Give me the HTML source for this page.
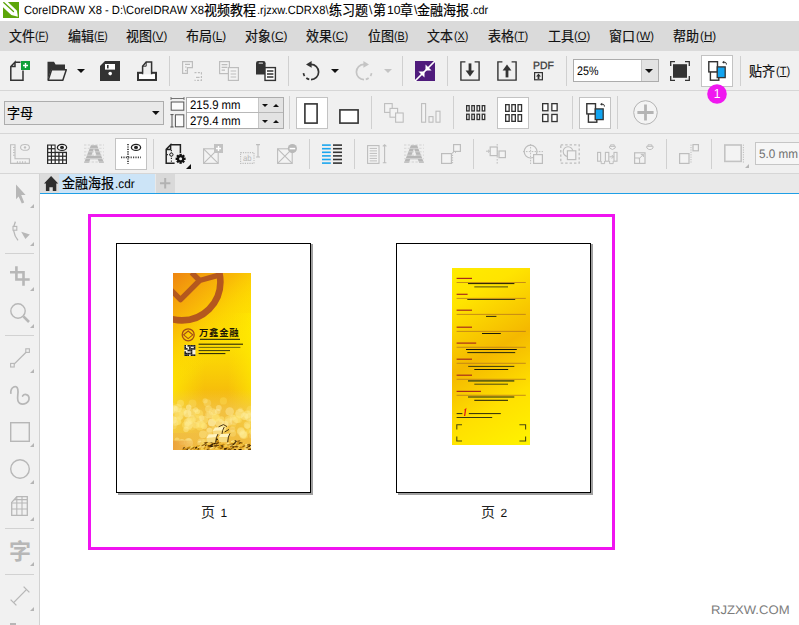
<!DOCTYPE html>
<html lang="zh"><head><meta charset="utf-8"><title>CorelDRAW X8</title>
<style>
html,body{margin:0;padding:0}
body{width:799px;height:625px;position:relative;overflow:hidden;background:#fff;font-family:"Liberation Sans",sans-serif}
.a{position:absolute;display:block}
.t{position:absolute;white-space:nowrap;line-height:1;display:block;text-rendering:geometricPrecision}
svg{overflow:visible}
svg text{font-family:"Liberation Sans","Noto Sans CJK SC",sans-serif}
</style></head><body>

<div class="a" style="left:0px;top:0px;width:799px;height:21px;background:#fff"></div>
<div class="a" style="left:0px;top:21px;width:799px;height:30px;background:#dadada"></div>
<div class="a" style="left:0px;top:51px;width:799px;height:122px;background:#f0f0f0"></div>
<div class="a" style="left:0px;top:90px;width:799px;height:1px;background:#d6d6d6"></div>
<div class="a" style="left:0px;top:133px;width:799px;height:1px;background:#d6d6d6"></div>
<div class="a" style="left:0px;top:173px;width:799px;height:1px;background:#d6d6d6"></div>
<div class="a" style="left:0px;top:174px;width:39px;height:451px;background:#f1f1f1"></div>
<div class="a" style="left:39px;top:174px;width:1px;height:451px;background:#d2d2d2"></div>
<div class="a" style="left:40px;top:174px;width:759px;height:19px;background:#e9e9e9"></div>
<div class="a" style="left:40px;top:174px;width:19px;height:19px;background:#dcdcdc"></div>
<div class="a" style="left:59px;top:174px;width:96px;height:19px;background:#cce4f7"></div>
<div class="a" style="left:156px;top:174px;width:19px;height:19px;background:#d9d9d9"></div>
<div class="a" style="left:40px;top:192.8px;width:759px;height:1.3px;background:#1f9fe6"></div>
<svg class="a" style="left:3px;top:2px" width="16" height="16" viewBox="0 0 16 16"><rect width="16" height="16" fill="#5ba508"/><path d="M0 0H4.9L14 8.8L14.9 14.8L8.3 13.1L0 5.2Z" fill="#fff"/><path d="M0.7 0.6L10.5 9.5" stroke="#5ba508" stroke-width="1.3" stroke-linecap="round"/></svg>
<span class="t" style="left:24.10px;top:4.44px;font-size:12px;color:#000;transform:scaleX(0.9320);transform-origin:0 0;">CoreIDRAW X8 - D:\CoreIDRAW X8</span>
<svg class="a" style="left:203.98px;top:1.40px" width="54.00" height="18.43" viewBox="0 -13.65 54.00 18.43" fill="#000"><text x="0" y="0" font-size="13.65" textLength="52" lengthAdjust="spacingAndGlyphs" fill="#000" stroke="#000" stroke-width="0.2">视频教程</text></svg>
<span class="t" style="left:256.60px;top:4.44px;font-size:12px;color:#000;transform:scaleX(0.9244);transform-origin:0 0;">.rjzxw.CDRX8\</span>
<svg class="a" style="left:328.98px;top:1.40px" width="41.00" height="18.43" viewBox="0 -13.65 41.00 18.43" fill="#000"><text x="0" y="0" font-size="13.65" textLength="39" lengthAdjust="spacingAndGlyphs" fill="#000" stroke="#000" stroke-width="0.2">练习题</text></svg>
<span class="t" style="left:369.00px;top:4.44px;font-size:12px;color:#000;">\</span>
<svg class="a" style="left:372.88px;top:1.40px" width="15.00" height="18.43" viewBox="0 -13.65 15.00 18.43" fill="#000"><text x="0" y="0" font-size="13.65" textLength="13" lengthAdjust="spacingAndGlyphs" fill="#000" stroke="#000" stroke-width="0.2">第</text></svg>
<span class="t" style="left:387.00px;top:4.44px;font-size:12px;color:#000;transform:scaleX(1.0114);transform-origin:0 0;">10</span>
<svg class="a" style="left:400.48px;top:1.40px" width="15.00" height="18.43" viewBox="0 -13.65 15.00 18.43" fill="#000"><text x="0" y="0" font-size="13.65" textLength="13" lengthAdjust="spacingAndGlyphs" fill="#000" stroke="#000" stroke-width="0.2">章</text></svg>
<span class="t" style="left:414.00px;top:4.44px;font-size:12px;color:#000;">\</span>
<svg class="a" style="left:417.48px;top:1.40px" width="54.00" height="18.43" viewBox="0 -13.65 54.00 18.43" fill="#000"><text x="0" y="0" font-size="13.65" textLength="52" lengthAdjust="spacingAndGlyphs" fill="#000" stroke="#000" stroke-width="0.2">金融海报</text></svg>
<span class="t" style="left:469.60px;top:4.44px;font-size:12px;color:#000;transform:scaleX(0.8998);transform-origin:0 0;">.cdr</span>
<svg class="a" style="left:8.68px;top:27.00px" width="28.00" height="18.43" viewBox="0 -13.65 28.00 18.43" fill="#111"><text x="0" y="0" font-size="13.65" textLength="26" lengthAdjust="spacingAndGlyphs" fill="#111" stroke="#111" stroke-width="0.2">文件</text></svg>
<span class="t" style="left:34.60px;top:30.14px;font-size:12px;color:#111;transform:scaleX(0.8876);transform-origin:0 0">(<u style="text-underline-offset:1px">F</u>)</span>
<svg class="a" style="left:67.97px;top:27.00px" width="28.00" height="18.43" viewBox="0 -13.65 28.00 18.43" fill="#111"><text x="0" y="0" font-size="13.65" textLength="26" lengthAdjust="spacingAndGlyphs" fill="#111" stroke="#111" stroke-width="0.2">编辑</text></svg>
<span class="t" style="left:93.80px;top:30.14px;font-size:12px;color:#111;transform:scaleX(0.8627);transform-origin:0 0">(<u style="text-underline-offset:1px">E</u>)</span>
<svg class="a" style="left:126.17px;top:27.00px" width="28.00" height="18.43" viewBox="0 -13.65 28.00 18.43" fill="#111"><text x="0" y="0" font-size="13.65" textLength="26" lengthAdjust="spacingAndGlyphs" fill="#111" stroke="#111" stroke-width="0.2">视图</text></svg>
<span class="t" style="left:152.40px;top:30.14px;font-size:12px;color:#111;transform:scaleX(0.9502);transform-origin:0 0">(<u style="text-underline-offset:1px">V</u>)</span>
<svg class="a" style="left:185.68px;top:27.00px" width="28.00" height="18.43" viewBox="0 -13.65 28.00 18.43" fill="#111"><text x="0" y="0" font-size="13.65" textLength="26" lengthAdjust="spacingAndGlyphs" fill="#111" stroke="#111" stroke-width="0.2">布局</text></svg>
<span class="t" style="left:212.40px;top:30.14px;font-size:12px;color:#111;transform:scaleX(0.9682);transform-origin:0 0">(<u style="text-underline-offset:1px">L</u>)</span>
<svg class="a" style="left:244.68px;top:27.00px" width="28.00" height="18.43" viewBox="0 -13.65 28.00 18.43" fill="#111"><text x="0" y="0" font-size="13.65" textLength="26" lengthAdjust="spacingAndGlyphs" fill="#111" stroke="#111" stroke-width="0.2">对象</text></svg>
<span class="t" style="left:271.00px;top:30.14px;font-size:12px;color:#111;transform:scaleX(0.9845);transform-origin:0 0">(<u style="text-underline-offset:1px">C</u>)</span>
<svg class="a" style="left:306.28px;top:27.00px" width="28.00" height="18.43" viewBox="0 -13.65 28.00 18.43" fill="#111"><text x="0" y="0" font-size="13.65" textLength="26" lengthAdjust="spacingAndGlyphs" fill="#111" stroke="#111" stroke-width="0.2">效果</text></svg>
<span class="t" style="left:332.40px;top:30.14px;font-size:12px;color:#111;transform:scaleX(0.9605);transform-origin:0 0">(<u style="text-underline-offset:1px">C</u>)</span>
<svg class="a" style="left:368.28px;top:27.00px" width="28.00" height="18.43" viewBox="0 -13.65 28.00 18.43" fill="#111"><text x="0" y="0" font-size="13.65" textLength="26" lengthAdjust="spacingAndGlyphs" fill="#111" stroke="#111" stroke-width="0.2">位图</text></svg>
<span class="t" style="left:394.00px;top:30.14px;font-size:12px;color:#111;transform:scaleX(0.8877);transform-origin:0 0">(<u style="text-underline-offset:1px">B</u>)</span>
<svg class="a" style="left:427.18px;top:27.00px" width="28.00" height="18.43" viewBox="0 -13.65 28.00 18.43" fill="#111"><text x="0" y="0" font-size="13.65" textLength="26" lengthAdjust="spacingAndGlyphs" fill="#111" stroke="#111" stroke-width="0.2">文本</text></svg>
<span class="t" style="left:453.60px;top:30.14px;font-size:12px;color:#111;transform:scaleX(0.9002);transform-origin:0 0">(<u style="text-underline-offset:1px">X</u>)</span>
<svg class="a" style="left:487.98px;top:27.00px" width="28.00" height="18.43" viewBox="0 -13.65 28.00 18.43" fill="#111"><text x="0" y="0" font-size="13.65" textLength="26" lengthAdjust="spacingAndGlyphs" fill="#111" stroke="#111" stroke-width="0.2">表格</text></svg>
<span class="t" style="left:513.80px;top:30.14px;font-size:12px;color:#111;transform:scaleX(0.9267);transform-origin:0 0">(<u style="text-underline-offset:1px">T</u>)</span>
<svg class="a" style="left:548.27px;top:27.00px" width="28.00" height="18.43" viewBox="0 -13.65 28.00 18.43" fill="#111"><text x="0" y="0" font-size="13.65" textLength="26" lengthAdjust="spacingAndGlyphs" fill="#111" stroke="#111" stroke-width="0.2">工具</text></svg>
<span class="t" style="left:573.80px;top:30.14px;font-size:12px;color:#111;transform:scaleX(0.9350);transform-origin:0 0">(<u style="text-underline-offset:1px">O</u>)</span>
<svg class="a" style="left:609.27px;top:27.00px" width="28.00" height="18.43" viewBox="0 -13.65 28.00 18.43" fill="#111"><text x="0" y="0" font-size="13.65" textLength="26" lengthAdjust="spacingAndGlyphs" fill="#111" stroke="#111" stroke-width="0.2">窗口</text></svg>
<span class="t" style="left:636.00px;top:30.14px;font-size:12px;color:#111;transform:scaleX(0.9317);transform-origin:0 0">(<u style="text-underline-offset:1px">W</u>)</span>
<svg class="a" style="left:673.47px;top:27.00px" width="28.00" height="18.43" viewBox="0 -13.65 28.00 18.43" fill="#111"><text x="0" y="0" font-size="13.65" textLength="26" lengthAdjust="spacingAndGlyphs" fill="#111" stroke="#111" stroke-width="0.2">帮助</text></svg>
<span class="t" style="left:700.00px;top:30.14px;font-size:12px;color:#111;transform:scaleX(0.9725);transform-origin:0 0">(<u style="text-underline-offset:1px">H</u>)</span>
<svg class="a" style="left:10px;top:61px" width="20" height="20" viewBox="0 0 20 20"><path d="M5 1.2H10.5M13 9.5V19.2H0.8V5.6L5 1.2V5.6H0.8" fill="none" stroke="#333" stroke-width="1.5"/><rect x="11" y="0" width="9" height="9" fill="#10a03a"/><path d="M15.5 2V7M13 4.5H18" stroke="#fff" stroke-width="1.4"/></svg>
<svg class="a" style="left:47px;top:61px" width="20" height="20" viewBox="0 0 20 20"><path d="M0.5 0.8H7L8.6 3.4H18V8.6H4.2L0.5 19.4Z" fill="#333"/><path d="M4.6 8.7H19.3L15.8 19.3H1.2Z" fill="#f0f0f0" stroke="#333" stroke-width="1.5" stroke-linejoin="round"/></svg>
<svg class="a" style="left:77px;top:69px" width="8" height="4" viewBox="0 0 8 4"><path d="M0 0H8 L4 4 Z" fill="#111"/></svg>
<svg class="a" style="left:100px;top:61px" width="20" height="20" viewBox="0 0 20 20"><path d="M5 0H20V20H0V5Z" fill="#333"/><rect x="5" y="3" width="10" height="5.6" fill="#fff"/><rect x="7" y="4" width="1.6" height="3.4" fill="#333"/><circle cx="10.2" cy="12.6" r="1.8" fill="#fff"/></svg>
<svg class="a" style="left:137px;top:61px" width="20" height="20" viewBox="0 0 20 20"><rect x="1" y="11.8" width="18" height="7.2" fill="#fff" stroke="#333" stroke-width="2"/><path d="M5.6 13.2V5.2L9.2 1H14.6V13.2" fill="#f0f0f0" stroke="#333" stroke-width="1.5"/><path d="M5.6 5.2H9.2V1" fill="none" stroke="#333" stroke-width="1"/><path d="M6.4 12.9H13.8" stroke="#f0f0f0" stroke-width="0.6"/></svg>
<div class="a" style="left:169px;top:56px;width:1px;height:30px;background:#d0d0d0"></div>
<svg class="a" style="left:182px;top:61px" width="20" height="20" viewBox="0 0 20 20"><path d="M0.6 0.6H10.4V6.6H5.4V12.4H0.6Z" fill="#f3f3f3" stroke="#bdbdbd" stroke-width="1.2"/><path d="M3 3.4H8M3 6H4.6M3 9.6H4.6" stroke="#bdbdbd" stroke-width="1.2"/><path d="M12.5 11.6H19.4V19.4H12.5" fill="#f3f3f3" stroke="#bdbdbd" stroke-width="1.2" stroke-dasharray="2 1.4"/><path d="M14 16.4H17.6" stroke="#bdbdbd" stroke-width="1.2"/></svg>
<svg class="a" style="left:219px;top:61px" width="20" height="20" viewBox="0 0 20 20"><rect x="0.6" y="0.6" width="9.8" height="12" fill="#f3f3f3" stroke="#bdbdbd" stroke-width="1.2"/><path d="M2.6 3.6H8.4M2.6 6.4H8.4M2.6 9.2H6" stroke="#bdbdbd" stroke-width="1.2"/><rect x="9.4" y="6.6" width="10" height="12.8" fill="#f3f3f3" stroke="#bdbdbd" stroke-width="1.2"/><path d="M11.6 10H17.2M11.6 13H17.2M11.6 16H17.2" stroke="#bdbdbd" stroke-width="1.2"/></svg>
<svg class="a" style="left:256px;top:61px" width="20" height="20" viewBox="0 0 20 20"><path d="M0 2.2Q0 0 2.2 0H7.4Q9.6 0 9.6 2.2V13.4H0Z" fill="#333"/><rect x="2.6" y="1.4" width="4.4" height="1.4" rx=".6" fill="#cfcfcf"/><rect x="9" y="6.6" width="10.4" height="12.8" fill="#fff" stroke="#333" stroke-width="1.4"/><path d="M11 10H17.4M11 13H17.4M11 16H17.4" stroke="#333" stroke-width="1.5"/></svg>
<div class="a" style="left:288px;top:56px;width:1px;height:30px;background:#d0d0d0"></div>
<svg class="a" style="left:300.6px;top:61px" width="20" height="20" viewBox="0 0 20 20"><path d="M10 3.4A7.6 7.6 0 1 1 10 18.6" fill="none" stroke="#333" stroke-width="1.7"/><path d="M10 18.6A7.6 7.6 0 0 1 2.4 11" fill="none" stroke="#333" stroke-width="1.7" stroke-dasharray="3.2 2.6" stroke-dashoffset="-1.8"/><path d="M10.6 0V6.8L5 3.4Z" fill="#333"/></svg>
<svg class="a" style="left:331px;top:69px" width="8" height="4" viewBox="0 0 8 4"><path d="M0 0H8 L4 4 Z" fill="#111"/></svg>
<svg class="a" style="left:353.6px;top:61px" width="20" height="20" viewBox="0 0 20 20"><g transform="translate(20,0) scale(-1,1)"><path d="M10 3.4A7.6 7.6 0 1 1 10 18.6" fill="none" stroke="#c4c4c4" stroke-width="1.7"/><path d="M10 18.6A7.6 7.6 0 0 1 2.4 11" fill="none" stroke="#c4c4c4" stroke-width="1.7" stroke-dasharray="3.2 2.6" stroke-dashoffset="-1.8"/><path d="M10.6 0V6.8L5 3.4Z" fill="#c4c4c4"/></g></svg>
<svg class="a" style="left:384px;top:69px" width="8" height="4" viewBox="0 0 8 4"><path d="M0 0H8 L4 4 Z" fill="#c4c4c4"/></svg>
<div class="a" style="left:402px;top:56px;width:1px;height:30px;background:#d0d0d0"></div>
<svg class="a" style="left:415px;top:61px" width="20" height="20" viewBox="0 0 20 20"><rect width="20" height="20" fill="#4f1b7c"/><path d="M20 0L0 20" stroke="#fff" stroke-width="1.7"/><path d="M10.5 3.4V9.5H16.6ZM9.5 16.6V10.5H3.4Z" fill="#fff"/></svg>
<div class="a" style="left:447px;top:56px;width:1px;height:30px;background:#d0d0d0"></div>
<svg class="a" style="left:460px;top:61px" width="20" height="20" viewBox="0 0 20 20"><path d="M5.4 0.9H0.9V19.1H19.1V0.9H14.6" fill="none" stroke="#333" stroke-width="1.4"/><path d="M10 2.4V11" stroke="#333" stroke-width="2.8"/><path d="M5.6 9.4H14.4L10 15.4Z" fill="#333"/></svg>
<svg class="a" style="left:497px;top:61px" width="20" height="20" viewBox="0 0 20 20"><path d="M5.4 0.9H0.9V19.1H19.1V0.9H14.6" fill="none" stroke="#333" stroke-width="1.4"/><path d="M10 16.4V8" stroke="#333" stroke-width="2.8"/><path d="M5.6 9.6H14.4L10 3.4Z" fill="#333"/></svg>
<span class="t" style="left:533.40px;top:60.83px;font-size:10.6px;color:#3a3a3a;transform:scaleX(0.9811);transform-origin:0 0;-webkit-text-stroke:.3px #3a3a3a;">PDF</span>
<svg class="a" style="left:534px;top:72px" width="9" height="8.4" viewBox="0 0 9 8.4"><rect x="0.6" y="0.6" width="7.8" height="7.2" fill="none" stroke="#333" stroke-width="1.2"/><path d="M4.5 1.6L7 4.4H5.4V7H3.6V4.4H2Z" fill="#333"/></svg>
<div class="a" style="left:566px;top:56px;width:1px;height:30px;background:#d0d0d0"></div>
<div class="a" style="left:573px;top:59px;width:86px;height:23px;background:#fff;border:1px solid #acacac;box-sizing:border-box"></div>
<div class="a" style="left:640.5px;top:60px;width:17.5px;height:21px;background:#e3e3e3;border-left:1px solid #c6c6c6;box-sizing:border-box"></div>
<span class="t" style="left:577.00px;top:64.90px;font-size:12.4px;color:#000;transform:scaleX(0.8623);transform-origin:0 0;">25%</span>
<svg class="a" style="left:645.4px;top:69px" width="8" height="4" viewBox="0 0 8 4"><path d="M0 0H8 L4 4 Z" fill="#111"/></svg>
<svg class="a" style="left:670px;top:61px" width="20" height="20" viewBox="0 0 20 20"><rect x="3" y="3.2" width="14" height="13.6" fill="#333"/><path d="M0.7 5V0.7H5M15 0.7H19.3V5M19.3 15V19.3H15M5 19.3H0.7V15" fill="none" stroke="#333" stroke-width="1.3"/></svg>
<div class="a" style="left:701px;top:55px;width:32px;height:32px;background:#fff;border:1px solid #c3c3c3;box-sizing:border-box"></div>
<svg class="a" style="left:707px;top:61px" width="20" height="20" viewBox="0 0 20 20"><rect x="3.4" y="10.6" width="8.4" height="8.6" fill="#fff" stroke="#333" stroke-width="1.4"/><rect x="1.8" y="0.7" width="8.7" height="10.2" fill="#fff" stroke="#333" stroke-width="1.4"/><rect x="10.2" y="5.9" width="8" height="10.7" fill="#12a4f0" stroke="#333" stroke-width="1.3"/><path d="M16.4 1.3H18.2Q19.4 1.3 19.4 3.6" fill="none" stroke="#333" stroke-width="1"/><path d="M15 1.3L17.2 -0.2V2.8Z" fill="#333"/></svg>
<div class="a" style="left:740px;top:56px;width:1px;height:30px;background:#d0d0d0"></div>
<svg class="a" style="left:749.07px;top:62.20px" width="28.00" height="18.43" viewBox="0 -13.65 28.00 18.43" fill="#111"><text x="0" y="0" font-size="13.65" textLength="26" lengthAdjust="spacingAndGlyphs" fill="#111" stroke="#111" stroke-width="0.2">贴齐</text></svg>
<span class="t" style="left:775.60px;top:65.24px;font-size:12px;color:#111;transform:scaleX(0.9267);transform-origin:0 0">(<u style="text-underline-offset:1px">T</u>)</span>
<div class="a" style="left:4px;top:101px;width:160px;height:24px;background:#e9e9e9;border:1px solid #adadad;box-sizing:border-box"></div>
<svg class="a" style="left:7.27px;top:103.80px" width="28.00" height="18.43" viewBox="0 -13.65 28.00 18.43" fill="#000"><text x="0" y="0" font-size="13.65" textLength="26" lengthAdjust="spacingAndGlyphs" fill="#000" stroke="#000" stroke-width="0.2">字母</text></svg>
<svg class="a" style="left:152.4px;top:110.6px" width="7.6" height="4" viewBox="0 0 7.6 4"><path d="M0 0H7.6 L3.8 4 Z" fill="#111"/></svg>
<svg class="a" style="left:170px;top:97px" width="15" height="14" viewBox="0 0 15 14"><rect x="1.2" y="5" width="12.6" height="8.2" fill="#fbfbfb" stroke="#555" stroke-width="1"/><path d="M1 1.5H14" stroke="#666" stroke-width=".9"/><path d="M1 0V3M14 0V3" stroke="#666" stroke-width=".9"/></svg>
<svg class="a" style="left:170px;top:113.5px" width="15" height="14" viewBox="0 0 15 14"><rect x="5.4" y="0.8" width="8.4" height="12" fill="#fbfbfb" stroke="#555" stroke-width="1"/><path d="M2 0.5V13" stroke="#555" stroke-width="1"/><path d="M0.4 0.6H3.6M0.4 13H3.6" stroke="#555" stroke-width="1"/></svg>
<div class="a" style="left:186px;top:96.5px;width:97.5px;height:32px;background:#fff;border:1px solid #acacac;box-sizing:border-box"></div>
<div class="a" style="left:258px;top:97.5px;width:24.5px;height:30px;background:#e3e3e3;border-left:1px solid #c6c6c6;box-sizing:border-box"></div>
<div class="a" style="left:187px;top:112px;width:95.5px;height:1px;background:#b8b8b8"></div>
<span class="t" style="left:190.00px;top:99.10px;font-size:12.4px;color:#000;transform:scaleX(0.9178);transform-origin:0 0;">215.9 mm</span>
<span class="t" style="left:190.00px;top:115.10px;font-size:12.4px;color:#000;transform:scaleX(0.9178);transform-origin:0 0;">279.4 mm</span>
<svg class="a" style="left:261.6px;top:103.6px" width="6" height="3" viewBox="0 0 6 3"><path d="M0 0H6 L3 3 Z" fill="#111"/></svg>
<svg class="a" style="left:273.4px;top:103.6px" width="6" height="3" viewBox="0 0 6 3"><path d="M0 3H6L3 0Z" fill="#111"/></svg>
<svg class="a" style="left:261.6px;top:119.6px" width="6" height="3" viewBox="0 0 6 3"><path d="M0 0H6 L3 3 Z" fill="#111"/></svg>
<svg class="a" style="left:273.4px;top:119.6px" width="6" height="3" viewBox="0 0 6 3"><path d="M0 3H6L3 0Z" fill="#111"/></svg>
<div class="a" style="left:289px;top:96px;width:1px;height:33px;background:#d0d0d0"></div>
<div class="a" style="left:296px;top:97px;width:32px;height:32px;background:#fff;border:1px solid #c3c3c3;box-sizing:border-box"></div>
<svg class="a" style="left:304px;top:102.5px" width="14" height="21" viewBox="0 0 14 21"><rect x="0.9" y="0.9" width="12.2" height="19.2" fill="#fff" stroke="#333" stroke-width="1.6"/></svg>
<svg class="a" style="left:339px;top:108.5px" width="20" height="15" viewBox="0 0 20 15"><rect x="0.9" y="0.9" width="18.2" height="13.2" fill="#fff" stroke="#333" stroke-width="1.6"/></svg>
<div class="a" style="left:371px;top:96px;width:1px;height:33px;background:#d0d0d0"></div>
<svg class="a" style="left:384px;top:103px" width="20" height="20" viewBox="0 0 20 20"><rect x="0.6" y="0.6" width="7.6" height="8.8" fill="#f3f3f3" stroke="#bdbdbd" stroke-width="1.1"/><rect x="6" y="5.4" width="7.6" height="8.8" fill="#f3f3f3" stroke="#bdbdbd" stroke-width="1.1"/><rect x="11.6" y="10" width="7.6" height="9.2" fill="#f3f3f3" stroke="#bdbdbd" stroke-width="1.1"/></svg>
<svg class="a" style="left:421px;top:103px" width="20" height="20" viewBox="0 0 20 20"><rect x="0.6" y="0.6" width="4" height="18.6" fill="#f3f3f3" stroke="#bdbdbd" stroke-width="1.1"/><rect x="8" y="13.6" width="4" height="5.6" fill="#f3f3f3" stroke="#bdbdbd" stroke-width="1.1"/><rect x="15" y="8.2" width="4" height="11" fill="#f3f3f3" stroke="#bdbdbd" stroke-width="1.1"/></svg>
<div class="a" style="left:453px;top:96px;width:1px;height:33px;background:#d0d0d0"></div>
<svg class="a" style="left:466px;top:105.4px" width="20.8" height="17.2" viewBox="0 0 20.8 17.2"><rect x="0.65" y="0.65" width="2.5" height="5.3" fill="#fff" stroke="#333" stroke-width="1.3"/><rect x="5.85" y="0.65" width="2.5" height="5.3" fill="#fff" stroke="#333" stroke-width="1.3"/><rect x="11.05" y="0.65" width="2.5" height="5.3" fill="#fff" stroke="#333" stroke-width="1.3"/><rect x="16.25" y="0.65" width="2.5" height="5.3" fill="#fff" stroke="#333" stroke-width="1.3"/><rect x="0.65" y="9.25" width="2.5" height="5.3" fill="#fff" stroke="#333" stroke-width="1.3"/><rect x="5.85" y="9.25" width="2.5" height="5.3" fill="#fff" stroke="#333" stroke-width="1.3"/><rect x="11.05" y="9.25" width="2.5" height="5.3" fill="#fff" stroke="#333" stroke-width="1.3"/><rect x="16.25" y="9.25" width="2.5" height="5.3" fill="#fff" stroke="#333" stroke-width="1.3"/></svg>
<div class="a" style="left:497px;top:97px;width:32px;height:32px;background:#fff;border:1px solid #c3c3c3;box-sizing:border-box"></div>
<svg class="a" style="left:505px;top:104px" width="18.6" height="20" viewBox="0 0 18.6 20"><rect x="0.65" y="0.65" width="3.5" height="6.7" fill="#fff" stroke="#333" stroke-width="1.3"/><rect x="6.85" y="0.65" width="3.5" height="6.7" fill="#fff" stroke="#333" stroke-width="1.3"/><rect x="13.05" y="0.65" width="3.5" height="6.7" fill="#fff" stroke="#333" stroke-width="1.3"/><rect x="0.65" y="10.65" width="3.5" height="6.7" fill="#fff" stroke="#333" stroke-width="1.3"/><rect x="6.85" y="10.65" width="3.5" height="6.7" fill="#fff" stroke="#333" stroke-width="1.3"/><rect x="13.05" y="10.65" width="3.5" height="6.7" fill="#fff" stroke="#333" stroke-width="1.3"/></svg>
<svg class="a" style="left:542px;top:103.2px" width="18.4" height="21.6" viewBox="0 0 18.4 21.6"><rect x="0.65" y="0.65" width="5.3" height="7.1" fill="#fff" stroke="#333" stroke-width="1.3"/><rect x="9.85" y="0.65" width="5.3" height="7.1" fill="#fff" stroke="#333" stroke-width="1.3"/><rect x="0.65" y="11.45" width="5.3" height="7.1" fill="#fff" stroke="#333" stroke-width="1.3"/><rect x="9.85" y="11.45" width="5.3" height="7.1" fill="#fff" stroke="#333" stroke-width="1.3"/></svg>
<div class="a" style="left:572px;top:96px;width:1px;height:33px;background:#d0d0d0"></div>
<div class="a" style="left:579px;top:97px;width:32px;height:32px;background:#fff;border:1px solid #c3c3c3;box-sizing:border-box"></div>
<svg class="a" style="left:585px;top:103px" width="20" height="20" viewBox="0 0 20 20"><rect x="3.4" y="10.6" width="8.4" height="8.6" fill="#fff" stroke="#333" stroke-width="1.4"/><rect x="1.8" y="0.7" width="8.7" height="10.2" fill="#fff" stroke="#333" stroke-width="1.4"/><rect x="10.2" y="5.9" width="8" height="10.7" fill="#12a4f0" stroke="#333" stroke-width="1.3"/><path d="M16.4 1.3H18.2Q19.4 1.3 19.4 3.6" fill="none" stroke="#333" stroke-width="1"/><path d="M15 1.3L17.2 -0.2V2.8Z" fill="#333"/></svg>
<div class="a" style="left:617px;top:96px;width:1px;height:33px;background:#d0d0d0"></div>
<svg class="a" style="left:632.5px;top:100px" width="25" height="25" viewBox="0 0 25 25"><circle cx="12.5" cy="12.5" r="11.8" fill="#f4f4f4" stroke="#b4b4b4" stroke-width="1"/><path d="M12.5 4.4V20.6M4.4 12.5H20.6" stroke="#b4b4b4" stroke-width="2.8"/></svg>
<svg class="a" style="left:707px;top:84.4px" width="20" height="20" viewBox="0 0 20 20"><circle cx="10" cy="10" r="9.8" fill="#f018f0"/></svg>
<svg class="a" style="left:714px;top:89px" width="6" height="9.2" viewBox="0 0 6 9.2"><text x="3" y="9.2" font-size="12" text-anchor="middle" fill="#fff">1</text></svg>
<svg class="a" style="left:10px;top:144px" width="20" height="20" viewBox="0 0 20 20"><path d="M0.6 0.8H5V14.8H19.4V19.4H0.6Z" fill="#f3f3f3" stroke="#bdbdbd" stroke-width="1.1"/><path d="M3 3.4H4.8M3 6H4.8M3 8.6H4.8M3 11.2H4.8M7.4 17.2V19M10 17.2V19M12.6 17.2V19M15.2 17.2V19" stroke="#bdbdbd" stroke-width="1"/><ellipse cx="15" cy="3.4" rx="4.4" ry="2.9" fill="#f3f3f3" stroke="#bdbdbd" stroke-width="1.1"/><circle cx="15" cy="3.4" r="1.2" fill="#bdbdbd"/></svg>
<svg class="a" style="left:47px;top:144px" width="20" height="20" viewBox="0 0 20 20"><path d="M0 0.4H8.6V7.8H20V20H0Z" fill="#2b2b2b"/><rect x="1.3" y="1.6" width="2.5" height="2.5" fill="#fff"/><rect x="5.05" y="1.6" width="2.5" height="2.5" fill="#fff"/><rect x="1.3" y="5.35" width="2.5" height="2.5" fill="#fff"/><rect x="5.05" y="5.35" width="2.5" height="2.5" fill="#fff"/><rect x="1.3" y="9.1" width="2.5" height="2.5" fill="#fff"/><rect x="5.05" y="9.1" width="2.5" height="2.5" fill="#fff"/><rect x="8.8" y="9.1" width="2.5" height="2.5" fill="#fff"/><rect x="12.55" y="9.1" width="2.5" height="2.5" fill="#fff"/><rect x="16.3" y="9.1" width="2.5" height="2.5" fill="#fff"/><rect x="1.3" y="12.85" width="2.5" height="2.5" fill="#fff"/><rect x="5.05" y="12.85" width="2.5" height="2.5" fill="#fff"/><rect x="8.8" y="12.85" width="2.5" height="2.5" fill="#fff"/><rect x="12.55" y="12.85" width="2.5" height="2.5" fill="#fff"/><rect x="16.3" y="12.85" width="2.5" height="2.5" fill="#fff"/><rect x="1.3" y="16.6" width="2.5" height="2.5" fill="#fff"/><rect x="5.05" y="16.6" width="2.5" height="2.5" fill="#fff"/><rect x="8.8" y="16.6" width="2.5" height="2.5" fill="#fff"/><rect x="12.55" y="16.6" width="2.5" height="2.5" fill="#fff"/><rect x="16.3" y="16.6" width="2.5" height="2.5" fill="#fff"/><ellipse cx="15" cy="3.4" rx="4.6" ry="3" fill="#fff" stroke="#222" stroke-width="1.3"/><ellipse cx="15" cy="3.4" rx="2" ry="1.6" fill="#222"/></svg>
<svg class="a" style="left:84px;top:144px" width="20" height="20" viewBox="0 0 20 20"><path d="M0 1H20M0 4.4H20M0 7.8H20M0 11.2H20M0 14.6H20M0 18H20" stroke="#c9c9c9" stroke-width="1" stroke-dasharray="2.4 1.4"/><path d="M7 1H13L20 19H15.2L13.8 15.2H6.2L4.8 19H0ZM7.4 11.8H12.6L10 4.6Z" fill="#b6b6b6" fill-rule="evenodd"/><path d="M0 1H20M0 4.4H20M0 7.8H20M0 11.2H20M0 14.6H20M0 18H20" stroke="#f0f0f0" stroke-opacity=".5" stroke-width="1"/></svg>
<div class="a" style="left:115px;top:138px;width:32px;height:32px;background:#fff;border:1px solid #c3c3c3;box-sizing:border-box"></div>
<svg class="a" style="left:121px;top:144px" width="20" height="20" viewBox="0 0 20 20"><path d="M7 0V20" stroke="#444" stroke-width="1.8" stroke-dasharray="1.2 1.2"/><path d="M0 13.4H20" stroke="#444" stroke-width="1.8" stroke-dasharray="1.2 1.2"/><ellipse cx="15" cy="3.4" rx="4.6" ry="3" fill="#fff" stroke="#222" stroke-width="1.3"/><ellipse cx="15" cy="3.4" rx="2" ry="1.6" fill="#222"/></svg>
<div class="a" style="left:153px;top:139px;width:1px;height:30px;background:#d0d0d0"></div>
<svg class="a" style="left:165px;top:144px" width="21" height="20" viewBox="0 0 21 20"><path d="M5.6 0.8H15.4V9M9.6 19.2H1.2V5.4L5.6 0.8V5.4H1.2" fill="none" stroke="#222" stroke-width="1.5"/><path d="M6.4 6V19" stroke="#222" stroke-width="1.1" stroke-dasharray="1.3 1.3"/><path d="M1.6 10.6H9.4" stroke="#222" stroke-width="1.1" stroke-dasharray="1.3 1.3"/><circle cx="6.4" cy="10.6" r="1.6" fill="#f0f0f0" stroke="#222" stroke-width="1"/><rect x="-1.2" y="-5" width="2.4" height="3" fill="#111" transform="translate(15.6,14.8) rotate(0)"/><rect x="-1.2" y="-5" width="2.4" height="3" fill="#111" transform="translate(15.6,14.8) rotate(45)"/><rect x="-1.2" y="-5" width="2.4" height="3" fill="#111" transform="translate(15.6,14.8) rotate(90)"/><rect x="-1.2" y="-5" width="2.4" height="3" fill="#111" transform="translate(15.6,14.8) rotate(135)"/><rect x="-1.2" y="-5" width="2.4" height="3" fill="#111" transform="translate(15.6,14.8) rotate(180)"/><rect x="-1.2" y="-5" width="2.4" height="3" fill="#111" transform="translate(15.6,14.8) rotate(225)"/><rect x="-1.2" y="-5" width="2.4" height="3" fill="#111" transform="translate(15.6,14.8) rotate(270)"/><rect x="-1.2" y="-5" width="2.4" height="3" fill="#111" transform="translate(15.6,14.8) rotate(315)"/><circle cx="15.6" cy="14.8" r="3.5" fill="#111"/><circle cx="15.6" cy="14.8" r="1.5" fill="#f0f0f0"/></svg>
<svg class="a" style="left:186px;top:164px" width="5" height="5" viewBox="0 0 5 5"><path d="M5 0V5H0Z" fill="#111"/></svg>
<svg class="a" style="left:203px;top:144px" width="20" height="20" viewBox="0 0 20 20"><rect x="0.6" y="4.8" width="14.6" height="14.6" fill="#f3f3f3" stroke="#bdbdbd" stroke-width="1.1"/><path d="M0.6 4.8L15.2 19.4M15.2 4.8L0.6 19.4" stroke="#bdbdbd" stroke-width="1.1"/><rect x="11" y="0" width="9" height="9" fill="#c2c2c2"/><path d="M15.5 2V7M13 4.5H18" stroke="#fff" stroke-width="1.4"/></svg>
<svg class="a" style="left:240px;top:144px" width="21" height="20" viewBox="0 0 21 20"><rect x="0.6" y="8.6" width="13.4" height="10.8" fill="none" stroke="#bdbdbd" stroke-width="1.1" stroke-dasharray="1.2 1.1"/><path d="M18 1V12.6M16 0.6H20M16 13H20" stroke="#bdbdbd" stroke-width="1.1" fill="none"/></svg>
<span class="t" style="left:243.00px;top:154.32px;font-size:8.6px;color:#b9b9b9;transform:scaleX(0.8990);transform-origin:0 0;">ab</span>
<svg class="a" style="left:277px;top:144px" width="20" height="20" viewBox="0 0 20 20"><rect x="0.6" y="4.8" width="14.6" height="14.6" fill="#f3f3f3" stroke="#bdbdbd" stroke-width="1.1"/><path d="M0.6 4.8L15.2 19.4M15.2 4.8L0.6 19.4" stroke="#bdbdbd" stroke-width="1.1"/><circle cx="15.4" cy="4.6" r="4.6" fill="#b9b9b9"/><path d="M12.6 4.6H18.2" stroke="#fff" stroke-width="1.5"/></svg>
<div class="a" style="left:309px;top:139px;width:1px;height:30px;background:#d0d0d0"></div>
<svg class="a" style="left:322px;top:144px" width="20" height="20" viewBox="0 0 20 20"><path d="M0 1.1H8.8" stroke="#1ba5ee" stroke-width="1.6"/><path d="M11 1.1H20" stroke="#333" stroke-width="1.6"/><path d="M0 4.7H8.8" stroke="#1ba5ee" stroke-width="1.6"/><path d="M11 4.7H20" stroke="#333" stroke-width="1.6"/><path d="M0 8.3H8.8" stroke="#1ba5ee" stroke-width="1.6"/><path d="M11 8.3H20" stroke="#333" stroke-width="1.6"/><path d="M0 11.9H8.8" stroke="#1ba5ee" stroke-width="1.6"/><path d="M11 11.9H20" stroke="#333" stroke-width="1.6"/><path d="M0 15.5H8.8" stroke="#1ba5ee" stroke-width="1.6"/><path d="M11 15.5H20" stroke="#333" stroke-width="1.6"/><path d="M0 19.1H8.8" stroke="#1ba5ee" stroke-width="1.6"/><path d="M11 19.1H20" stroke="#333" stroke-width="1.6"/></svg>
<div class="a" style="left:354px;top:139px;width:1px;height:30px;background:#d0d0d0"></div>
<svg class="a" style="left:367px;top:144px" width="21" height="20" viewBox="0 0 21 20"><rect x="0.6" y="1.6" width="11.4" height="17.8" fill="#f3f3f3" stroke="#bdbdbd" stroke-width="1.1"/><path d="M2.6 4.4H10" stroke="#bdbdbd" stroke-width="1"/><path d="M2.6 6.9H10" stroke="#bdbdbd" stroke-width="1"/><path d="M2.6 9.4H10" stroke="#bdbdbd" stroke-width="1"/><path d="M2.6 11.9H10" stroke="#bdbdbd" stroke-width="1"/><path d="M2.6 14.4H10" stroke="#bdbdbd" stroke-width="1"/><path d="M2.6 16.9H10" stroke="#bdbdbd" stroke-width="1"/><path d="M17.6 2.6V18.6M15.8 18.8H19.4M15.8 2.4L17.6 0.8L19.4 2.4M17.6 0.8V4" stroke="#bdbdbd" stroke-width="1.1" fill="none"/></svg>
<svg class="a" style="left:404px;top:144px" width="20" height="20" viewBox="0 0 20 20"><path d="M0 1H20M0 4.4H20M0 7.8H20M0 11.2H20M0 14.6H20M0 18H20" stroke="#c9c9c9" stroke-width="1" stroke-dasharray="2.4 1.4"/><path d="M7 1H13L20 19H15.2L13.8 15.2H6.2L4.8 19H0ZM7.4 11.8H12.6L10 4.6Z" fill="#b6b6b6" fill-rule="evenodd"/><path d="M0 1H20M0 4.4H20M0 7.8H20M0 11.2H20M0 14.6H20M0 18H20" stroke="#f0f0f0" stroke-opacity=".5" stroke-width="1"/></svg>
<svg class="a" style="left:441px;top:144px" width="20" height="20" viewBox="0 0 20 20"><rect x="0.6" y="9.6" width="9.8" height="9.8" fill="#f3f3f3" stroke="#bdbdbd" stroke-width="1.2"/><rect x="12.6" y="0.6" width="6.8" height="6.8" fill="#f3f3f3" stroke="#bdbdbd" stroke-width="1.2"/><path d="M11.6 8.4V19.4" stroke="#bdbdbd" stroke-width="1" stroke-dasharray="1.2 1.2"/><path d="M11.6 8.4H15" stroke="#bdbdbd" stroke-width="1" stroke-dasharray="1.2 1.2"/></svg>
<div class="a" style="left:473px;top:139px;width:1px;height:30px;background:#d0d0d0"></div>
<svg class="a" style="left:486px;top:144px" width="20" height="20" viewBox="0 0 20 20"><path d="M11.2 0V20" stroke="#bdbdbd" stroke-width="1" stroke-dasharray="1.6 1.4"/><rect x="4.2" y="3" width="7" height="8.6" fill="#f3f3f3" stroke="#bdbdbd" stroke-width="1.2"/><rect x="13" y="7" width="6.4" height="6.6" fill="#f3f3f3" stroke="#bdbdbd" stroke-width="1.2"/><path d="M0 7.2H3.4M2 5.8L3.6 7.2L2 8.6" stroke="#bdbdbd" stroke-width="1" fill="none"/></svg>
<svg class="a" style="left:523px;top:144px" width="20" height="20" viewBox="0 0 20 20"><circle cx="7.6" cy="7.6" r="6.4" fill="#f3f3f3" stroke="#bdbdbd" stroke-width="1.2"/><path d="M7.6 0V15.2M0 7.6H15.2" stroke="#bdbdbd" stroke-width="1" stroke-dasharray="1.6 1.3"/><rect x="10.6" y="10.6" width="8.8" height="8.8" fill="#f3f3f3" stroke="#bdbdbd" stroke-width="1.2"/><path d="M7.6 16V20M16 7.6H20" stroke="#bdbdbd" stroke-width="1" stroke-dasharray="1.4 1.2"/></svg>
<svg class="a" style="left:560px;top:144px" width="20" height="20" viewBox="0 0 20 20"><rect x="0.8" y="0.8" width="18.4" height="18.4" fill="none" stroke="#bdbdbd" stroke-width="1.3" stroke-dasharray="2.4 2"/><circle cx="8" cy="7.6" r="4.8" fill="#f3f3f3" stroke="#bdbdbd" stroke-width="1.1"/><rect x="7.4" y="6.8" width="8.4" height="8.8" fill="#f3f3f3" stroke="#bdbdbd" stroke-width="1.2"/></svg>
<svg class="a" style="left:597px;top:144px" width="21" height="20" viewBox="0 0 21 20"><rect x="0.6" y="8.4" width="3" height="8.8" fill="#f3f3f3" stroke="#bdbdbd" stroke-width="1.1"/><rect x="8.4" y="8.4" width="3.4" height="8.8" fill="#f3f3f3" stroke="#bdbdbd" stroke-width="1.1"/><rect x="17" y="8.4" width="3" height="8.8" fill="#f3f3f3" stroke="#bdbdbd" stroke-width="1.1"/><path d="M4.2 17V19.6H7.6V17M12.6 17V19.6H16.2V17M12.4 12.8H16.4M14.8 11L16.6 12.8L14.8 14.6" fill="none" stroke="#bdbdbd" stroke-width="1"/><path d="M12.6 2.2H18.2V4Q15.4 7 12.6 4Z" fill="#f3f3f3" stroke="#bdbdbd" stroke-width="1"/><path d="M13.6 0.8H17.2V2.2H13.6Z" fill="#f3f3f3" stroke="#bdbdbd" stroke-width=".9"/></svg>
<svg class="a" style="left:634px;top:144px" width="20" height="20" viewBox="0 0 20 20"><rect x="0.6" y="8.8" width="10.4" height="10.6" fill="#f3f3f3" stroke="#bdbdbd" stroke-width="1.2"/><path d="M0.6 14H5.6V19.4M4.6 15.2L9.2 10.6M6.8 10.4H9.4V13" fill="none" stroke="#bdbdbd" stroke-width="1"/><path d="M12.8 2.2H19V4Q15.9 7.2 12.8 4Z" fill="#f3f3f3" stroke="#bdbdbd" stroke-width="1"/><path d="M14 0.8H17.8V2.2H14Z" fill="#f3f3f3" stroke="#bdbdbd" stroke-width=".9"/></svg>
<div class="a" style="left:666px;top:139px;width:1px;height:30px;background:#d0d0d0"></div>
<svg class="a" style="left:679px;top:144px" width="20" height="20" viewBox="0 0 20 20"><rect x="0.6" y="9.6" width="9.4" height="9.8" fill="#f3f3f3" stroke="#bdbdbd" stroke-width="1.2"/><rect x="14" y="0.6" width="5.4" height="6.2" fill="#f3f3f3" stroke="#bdbdbd" stroke-width="1.2"/><path d="M12 0.6V19.4" stroke="#bdbdbd" stroke-width="1" stroke-dasharray="1.2 1.2"/></svg>
<div class="a" style="left:711px;top:139px;width:1px;height:30px;background:#d0d0d0"></div>
<svg class="a" style="left:724px;top:144px" width="20" height="20" viewBox="0 0 20 20"><rect x="0.8" y="1" width="16.4" height="16.4" fill="#f3f3f3" stroke="#c3c3c3" stroke-width="1.6"/><path d="M19.4 0.6V19" stroke="#bdbdbd" stroke-width="1" stroke-dasharray="1.2 1.2"/></svg>
<svg class="a" style="left:745px;top:164px" width="4" height="4" viewBox="0 0 4 4"><path d="M4 0V4H0Z" fill="#b5b5b5"/></svg>
<div class="a" style="left:755px;top:142px;width:50px;height:23.4px;background:#f6f6f6;border:1px solid #c6c6c6;box-sizing:border-box"></div>
<span class="t" style="left:759.40px;top:148.10px;font-size:12.4px;color:#6e6e6e;transform:scaleX(0.9434);transform-origin:0 0;">5.0 mm</span>
<svg class="a" style="left:44.4px;top:176px" width="14.2" height="15" viewBox="0 0 14.2 15"><path d="M7.1 0L14.2 7.6H12.3V15H8.8V11.2H5.4V15H1.9V7.6H0Z" fill="#2e2e2e"/></svg>
<svg class="a" style="left:62.27px;top:174.40px" width="54.00" height="18.43" viewBox="0 -13.65 54.00 18.43" fill="#000"><text x="0" y="0" font-size="13.65" textLength="52" lengthAdjust="spacingAndGlyphs" fill="#000" stroke="#000" stroke-width="0.2">金融海报</text></svg>
<span class="t" style="left:115.40px;top:177.70px;font-size:12.4px;color:#000;transform:scaleX(0.9482);transform-origin:0 0;">.cdr</span>
<svg class="a" style="left:160.4px;top:178.3px" width="10.4" height="10.4" viewBox="0 0 10.4 10.4"><path d="M5.2 0V10.4M0 5.2H10.4" stroke="#b2b2b2" stroke-width="2"/></svg>
<svg class="a" style="left:15px;top:184px" width="12" height="20" viewBox="0 0 12 20"><path d="M1 0.6L10.6 11H6.2L9.2 18.4L6.8 19.6L3.6 12.4L1 15.2Z" fill="#b7b7b7"/></svg>
<svg class="a" style="left:30.4px;top:204.4px" width="4" height="4" viewBox="0 0 4 4"><path d="M4 0V4H0Z" fill="#b5b5b5"/></svg>
<svg class="a" style="left:12px;top:221px" width="19" height="20" viewBox="0 0 19 20"><path d="M3.4 0.6Q-1.2 10 6 19.4" fill="none" stroke="#b7b7b7" stroke-width="1.3"/><rect x="1" y="5.4" width="3.8" height="3.8" fill="#f0f0f0" stroke="#b7b7b7" stroke-width="1.1"/><path d="M9.2 10.8L17.8 13.6L13.4 18Z" fill="#b7b7b7"/></svg>
<svg class="a" style="left:30.4px;top:241.8px" width="4" height="4" viewBox="0 0 4 4"><path d="M4 0V4H0Z" fill="#b5b5b5"/></svg>
<div class="a" style="left:5px;top:253px;width:29px;height:1px;background:#d2d2d2"></div>
<svg class="a" style="left:10px;top:266px" width="20" height="20" viewBox="0 0 20 20"><path d="M6.4 0.3V13.5H19.7M0 6.3H13.5V19.8" fill="none" stroke="#b7b7b7" stroke-width="2.6"/></svg>
<svg class="a" style="left:30.4px;top:287px" width="4" height="4" viewBox="0 0 4 4"><path d="M4 0V4H0Z" fill="#b5b5b5"/></svg>
<svg class="a" style="left:10px;top:303px" width="20" height="20" viewBox="0 0 20 20"><circle cx="8" cy="8" r="7.2" fill="none" stroke="#b7b7b7" stroke-width="1.4"/><path d="M13.4 13.4L19 19" stroke="#b7b7b7" stroke-width="2.6"/></svg>
<svg class="a" style="left:30.4px;top:324.4px" width="4" height="4" viewBox="0 0 4 4"><path d="M4 0V4H0Z" fill="#b5b5b5"/></svg>
<div class="a" style="left:5px;top:335px;width:29px;height:1px;background:#d2d2d2"></div>
<svg class="a" style="left:10px;top:348px" width="21" height="21" viewBox="0 0 21 21"><path d="M3.6 16.6L16.6 3.8" stroke="#b7b7b7" stroke-width="1.3"/><rect x="0.6" y="15.4" width="3.6" height="3.6" fill="#f0f0f0" stroke="#b7b7b7" stroke-width="1.1"/><rect x="15.8" y="0.8" width="3.6" height="3.6" fill="#f0f0f0" stroke="#b7b7b7" stroke-width="1.1"/></svg>
<svg class="a" style="left:30.4px;top:369px" width="4" height="4" viewBox="0 0 4 4"><path d="M4 0V4H0Z" fill="#b5b5b5"/></svg>
<svg class="a" style="left:10px;top:385px" width="20" height="20" viewBox="0 0 20 20"><path d="M0.8 8.2C0.4 1.8 6.6 -0.8 7.8 4.2C9 9 5.4 15.6 9.6 18.2C13.6 20.6 19.6 17.6 19 12.6C18.6 9.2 14.2 8.4 12.6 11" fill="none" stroke="#b7b7b7" stroke-width="1.7" stroke-linecap="round"/></svg>
<svg class="a" style="left:10px;top:422px" width="20" height="20" viewBox="0 0 20 20"><rect x="0.7" y="0.7" width="18.6" height="18.6" fill="none" stroke="#b7b7b7" stroke-width="1.4"/></svg>
<svg class="a" style="left:30.4px;top:443px" width="4" height="4" viewBox="0 0 4 4"><path d="M4 0V4H0Z" fill="#b5b5b5"/></svg>
<svg class="a" style="left:10px;top:459px" width="20" height="20" viewBox="0 0 20 20"><circle cx="10" cy="10" r="9.3" fill="none" stroke="#b7b7b7" stroke-width="1.4"/></svg>
<svg class="a" style="left:30.4px;top:480px" width="4" height="4" viewBox="0 0 4 4"><path d="M4 0V4H0Z" fill="#b5b5b5"/></svg>
<svg class="a" style="left:11px;top:496px" width="17" height="20" viewBox="0 0 17 20"><path d="M5.8 0.7H16.3V19.3H0.7V6.4Z" fill="none" stroke="#b7b7b7" stroke-width="1.3"/><path d="M5.8 0.7V19.3M11 0.7V19.3M0.7 7H16.3M0.7 13H16.3M3 3.6H16" stroke="#b7b7b7" stroke-width="1.1" fill="none"/></svg>
<svg class="a" style="left:30.4px;top:517px" width="4" height="4" viewBox="0 0 4 4"><path d="M4 0V4H0Z" fill="#b5b5b5"/></svg>
<div class="a" style="left:5px;top:527.5px;width:29px;height:1px;background:#d2d2d2"></div>
<svg class="a" style="left:9.07px;top:537.35px" width="23.00" height="29.77" viewBox="0 -22.05 23.00 29.77" fill="#b7b7b7"><text x="0" y="0" font-size="22.05" font-weight="bold" fill="#b7b7b7">字</text></svg>
<svg class="a" style="left:30.4px;top:562px" width="4" height="4" viewBox="0 0 4 4"><path d="M4 0V4H0Z" fill="#b5b5b5"/></svg>
<div class="a" style="left:5px;top:573.5px;width:29px;height:1px;background:#d2d2d2"></div>
<svg class="a" style="left:10px;top:586px" width="20" height="20" viewBox="0 0 20 20"><path d="M3.6 16.6L16.4 3.6" stroke="#b7b7b7" stroke-width="1.3"/><path d="M0.6 13.6L6.4 19.4M13.6 0.6L19.4 6.4" stroke="#b7b7b7" stroke-width="1.3"/></svg>
<svg class="a" style="left:30.4px;top:607.4px" width="4" height="4" viewBox="0 0 4 4"><path d="M4 0V4H0Z" fill="#b5b5b5"/></svg>
<div class="a" style="left:10px;top:623.4px;width:6px;height:2px;background:#b7b7b7"></div>
<div class="a" style="left:88px;top:214px;width:527px;height:336px;border:3px solid #f014f0;box-sizing:border-box"></div>
<div class="a" style="left:118px;top:244px;width:195px;height:251px;background:#a0a0a0"></div>
<div class="a" style="left:116px;top:243px;width:195px;height:250px;background:#fff;border:1px solid #000;box-sizing:border-box"></div>
<div class="a" style="left:398px;top:244px;width:195px;height:251px;background:#a0a0a0"></div>
<div class="a" style="left:396px;top:243px;width:195px;height:250px;background:#fff;border:1px solid #000;box-sizing:border-box"></div>
<svg class="a" style="left:200.80px;top:503.20px" width="16.00" height="18.90" viewBox="0 -14.00 16.00 18.90" fill="#222"><text x="0" y="0" font-size="14" fill="#222">页</text></svg>
<span class="t" style="left:220.60px;top:506.84px;font-size:12px;color:#111;">1</span>
<svg class="a" style="left:480.80px;top:503.20px" width="16.00" height="18.90" viewBox="0 -14.00 16.00 18.90" fill="#222"><text x="0" y="0" font-size="14" fill="#222">页</text></svg>
<span class="t" style="left:500.40px;top:506.84px;font-size:12px;color:#111;">2</span>
<span class="t" style="left:711.40px;top:604.40px;font-size:12.4px;color:#7c7c7c;transform:scaleX(1.0565);transform-origin:0 0;">RJZXW.COM</span>
<svg class="a" style="left:173px;top:273px" width="78" height="177" viewBox="0 0 78 177"><defs><linearGradient id="p1a" gradientUnits="userSpaceOnUse" x1="0" y1="0" x2="62" y2="70"><stop offset="0" stop-color="#ee8410"/><stop offset=".45" stop-color="#f8b208" stop-opacity=".85"/><stop offset="1" stop-color="#ffe000" stop-opacity="0"/></linearGradient><linearGradient id="p1b" x1="0" y1="0" x2="0" y2="1"><stop offset="0" stop-color="#f6bc08" stop-opacity="0"/><stop offset=".38" stop-color="#f8c808" stop-opacity=".25"/><stop offset=".68" stop-color="#f5b90c" stop-opacity=".95"/><stop offset="1" stop-color="#f2b21c"/></linearGradient><linearGradient id="p1e" x1="0" y1="0" x2="1" y2="0"><stop offset="0" stop-color="#ffea00" stop-opacity=".75"/><stop offset=".4" stop-color="#ffe600" stop-opacity="0"/><stop offset=".7" stop-color="#ffe600" stop-opacity="0"/><stop offset="1" stop-color="#ffee00" stop-opacity=".6"/></linearGradient><linearGradient id="p1c" x1="0" y1="0" x2="0" y2="1"><stop offset="0" stop-color="#f4c850" stop-opacity="0"/><stop offset=".35" stop-color="#f2c656" stop-opacity=".7"/><stop offset="1" stop-color="#f0c050" stop-opacity=".7"/></linearGradient><linearGradient id="p1d" x1="0" y1="0" x2="1" y2="0"><stop offset="0" stop-color="#eca23a"/><stop offset=".5" stop-color="#eeae48" stop-opacity=".6"/><stop offset="1" stop-color="#f0b040" stop-opacity="0"/></linearGradient><clipPath id="p1clip"><rect width="78" height="177"/></clipPath></defs><g clip-path="url(#p1clip)"><rect width="78" height="177" fill="#ffe600"/><rect width="78" height="177" fill="url(#p1b)"/><rect y="40" width="78" height="120" fill="url(#p1e)"/><rect width="78" height="110" fill="url(#p1a)"/><circle cx="9" cy="9" r="38.4" fill="none" stroke="#b4581e" stroke-width="6.6"/><path d="M-2 17L7.5 26.6L26.6 7.5L18.6 -0.5M26.6 7.5L45 2.4" fill="none" stroke="#b4581e" stroke-width="5.4" stroke-linejoin="round"/><rect y="116" width="78" height="61" fill="url(#p1c)"/><circle cx="39.6" cy="138.7" r="3.7" fill="#ffee98" opacity="0.27"/><circle cx="37.0" cy="142.2" r="3.4" fill="#ffee98" opacity="0.26"/><circle cx="64.4" cy="142.8" r="3.9" fill="#ffe468" opacity="0.23"/><circle cx="77.1" cy="139.2" r="2.7" fill="#ffee98" opacity="0.22"/><circle cx="3.2" cy="135.6" r="2.5" fill="#ffee98" opacity="0.47"/><circle cx="0.5" cy="136.5" r="4.3" fill="#fff4b8" opacity="0.37"/><circle cx="39.0" cy="149.4" r="3.9" fill="#fff4b8" opacity="0.35"/><circle cx="18.8" cy="139.7" r="4.1" fill="#fff0a0" opacity="0.36"/><circle cx="3.8" cy="148.0" r="4.3" fill="#fff0a0" opacity="0.33"/><circle cx="67.5" cy="136.9" r="2.4" fill="#fff0a0" opacity="0.28"/><circle cx="36.5" cy="157.0" r="2.6" fill="#fff4b8" opacity="0.40"/><circle cx="25.6" cy="145.8" r="3.1" fill="#ffe468" opacity="0.22"/><circle cx="60.2" cy="152.5" r="2.6" fill="#ffe468" opacity="0.24"/><circle cx="12.6" cy="152.1" r="3.6" fill="#ffea80" opacity="0.35"/><circle cx="78.8" cy="148.3" r="3.2" fill="#ffea80" opacity="0.33"/><circle cx="-2.0" cy="136.7" r="4.3" fill="#ffee98" opacity="0.49"/><circle cx="22.9" cy="152.2" r="3.3" fill="#ffee98" opacity="0.46"/><circle cx="6.2" cy="142.4" r="4.6" fill="#fff4b8" opacity="0.28"/><circle cx="-1.2" cy="132.5" r="3.2" fill="#ffea80" opacity="0.24"/><circle cx="45.8" cy="135.0" r="2.9" fill="#fff4b8" opacity="0.39"/><circle cx="49.0" cy="156.3" r="4.2" fill="#ffe468" opacity="0.26"/><circle cx="13.0" cy="156.5" r="2.7" fill="#ffee98" opacity="0.47"/><circle cx="18.5" cy="153.1" r="4.5" fill="#ffe468" opacity="0.28"/><circle cx="70.3" cy="162.2" r="3.7" fill="#fff0a0" opacity="0.34"/><circle cx="6.9" cy="139.3" r="4.0" fill="#ffe468" opacity="0.33"/><circle cx="65.5" cy="146.4" r="3.7" fill="#ffea80" opacity="0.30"/><circle cx="74.2" cy="152.1" r="3.5" fill="#ffee98" opacity="0.40"/><circle cx="48.4" cy="146.3" r="3.0" fill="#ffea80" opacity="0.48"/><circle cx="59.4" cy="156.3" r="2.9" fill="#fff4b8" opacity="0.23"/><circle cx="28.2" cy="151.3" r="3.7" fill="#fff4b8" opacity="0.26"/><circle cx="9.3" cy="138.5" r="4.0" fill="#ffea80" opacity="0.37"/><circle cx="46.4" cy="149.8" r="4.4" fill="#fff4b8" opacity="0.35"/><circle cx="55.5" cy="149.0" r="3.8" fill="#fff4b8" opacity="0.36"/><circle cx="24.2" cy="146.5" r="4.6" fill="#ffee98" opacity="0.24"/><circle cx="28.2" cy="169.6" r="4.0" fill="#fff4b8" opacity="0.26"/><circle cx="26.9" cy="153.5" r="3.9" fill="#ffe468" opacity="0.47"/><circle cx="75.4" cy="158.6" r="2.4" fill="#ffe468" opacity="0.41"/><circle cx="45.8" cy="149.2" r="3.7" fill="#fff0a0" opacity="0.24"/><circle cx="79.5" cy="158.8" r="3.3" fill="#ffee98" opacity="0.43"/><circle cx="35.5" cy="135.9" r="3.4" fill="#ffee98" opacity="0.37"/><circle cx="59.5" cy="160.3" r="3.5" fill="#fff0a0" opacity="0.28"/><circle cx="38.8" cy="149.5" r="3.8" fill="#fff4b8" opacity="0.48"/><circle cx="71.5" cy="143.2" r="3.7" fill="#fff4b8" opacity="0.37"/><circle cx="52.1" cy="151.1" r="3.4" fill="#fff4b8" opacity="0.47"/><circle cx="31.2" cy="146.9" r="4.2" fill="#ffea80" opacity="0.43"/><circle cx="70.2" cy="161.2" r="3.2" fill="#fff4b8" opacity="0.38"/><circle cx="15.2" cy="153.2" r="4.4" fill="#fff0a0" opacity="0.23"/><circle cx="75.9" cy="154.0" r="3.0" fill="#ffe468" opacity="0.27"/><circle cx="36.7" cy="163.8" r="3.2" fill="#fff4b8" opacity="0.37"/><circle cx="56.7" cy="138.5" r="4.3" fill="#fff4b8" opacity="0.39"/><circle cx="4.1" cy="166.9" r="2.5" fill="#ffee98" opacity="0.42"/><circle cx="27.0" cy="151.0" r="3.8" fill="#ffea80" opacity="0.38"/><circle cx="31.2" cy="153.3" r="3.0" fill="#fff0a0" opacity="0.44"/><circle cx="78.7" cy="162.9" r="2.7" fill="#ffee98" opacity="0.25"/><circle cx="51.7" cy="155.9" r="3.9" fill="#ffe468" opacity="0.28"/><circle cx="59.9" cy="144.4" r="2.9" fill="#ffee98" opacity="0.44"/><circle cx="55.2" cy="146.4" r="3.5" fill="#ffea80" opacity="0.39"/><circle cx="30.3" cy="152.7" r="2.6" fill="#ffe468" opacity="0.48"/><circle cx="49.3" cy="155.2" r="3.7" fill="#fff4b8" opacity="0.47"/><circle cx="36.0" cy="141.8" r="3.8" fill="#fff0a0" opacity="0.28"/><circle cx="15.5" cy="169.7" r="4.6" fill="#fff4b8" opacity="0.37"/><circle cx="19.5" cy="130.5" r="4.0" fill="#ffee98" opacity="0.22"/><circle cx="4.8" cy="135.2" r="4.1" fill="#fff0a0" opacity="0.36"/><circle cx="15.9" cy="151.6" r="4.3" fill="#fff0a0" opacity="0.34"/><circle cx="12.2" cy="138.0" r="2.7" fill="#ffee98" opacity="0.26"/><circle cx="71.8" cy="162.2" r="3.5" fill="#ffe468" opacity="0.41"/><circle cx="16.2" cy="148.1" r="3.6" fill="#ffee98" opacity="0.30"/><circle cx="50.4" cy="127.9" r="3.6" fill="#ffe468" opacity="0.31"/><circle cx="76.3" cy="144.3" r="4.3" fill="#fff4b8" opacity="0.39"/><circle cx="67.8" cy="158.9" r="3.7" fill="#ffee98" opacity="0.28"/><circle cx="7.4" cy="144.6" r="2.4" fill="#ffee98" opacity="0.33"/><circle cx="77.5" cy="136.9" r="4.2" fill="#ffe468" opacity="0.38"/><circle cx="5.6" cy="146.0" r="2.8" fill="#ffe468" opacity="0.48"/><circle cx="31.9" cy="168.8" r="3.0" fill="#ffea80" opacity="0.35"/><circle cx="25.9" cy="140.9" r="4.4" fill="#ffe468" opacity="0.48"/><circle cx="41.0" cy="155.1" r="2.5" fill="#fff0a0" opacity="0.29"/><circle cx="0.9" cy="153.6" r="2.7" fill="#fff4b8" opacity="0.22"/><circle cx="24.4" cy="138.5" r="2.6" fill="#fff0a0" opacity="0.42"/><circle cx="67.9" cy="158.0" r="3.8" fill="#ffee98" opacity="0.42"/><circle cx="70.1" cy="161.0" r="4.2" fill="#ffee98" opacity="0.39"/><circle cx="14.7" cy="149.1" r="3.8" fill="#ffee98" opacity="0.40"/><circle cx="15.7" cy="134.2" r="2.7" fill="#fff4b8" opacity="0.48"/><circle cx="72.0" cy="143.5" r="3.1" fill="#ffea80" opacity="0.31"/><circle cx="15.9" cy="167.9" r="2.7" fill="#fff0a0" opacity="0.29"/><circle cx="19.3" cy="146.8" r="2.6" fill="#ffe468" opacity="0.45"/><circle cx="42.5" cy="145.1" r="3.8" fill="#fff0a0" opacity="0.44"/><circle cx="14.5" cy="140.6" r="3.9" fill="#fff4b8" opacity="0.48"/><circle cx="7.5" cy="130.2" r="3.5" fill="#ffea80" opacity="0.41"/><circle cx="63.8" cy="146.4" r="3.5" fill="#ffee98" opacity="0.23"/><circle cx="48.3" cy="156.5" r="2.8" fill="#ffea80" opacity="0.25"/><circle cx="66.9" cy="140.6" r="4.6" fill="#fff0a0" opacity="0.48"/><circle cx="45.5" cy="157.0" r="2.6" fill="#ffe468" opacity="0.25"/><circle cx="36.3" cy="158.3" r="3.5" fill="#ffee98" opacity="0.34"/><circle cx="28.6" cy="145.1" r="2.8" fill="#fff4b8" opacity="0.33"/><circle cx="58.6" cy="144.8" r="3.3" fill="#ffea80" opacity="0.27"/><circle cx="5.8" cy="149.3" r="2.6" fill="#ffe468" opacity="0.46"/><circle cx="44.7" cy="138.5" r="2.8" fill="#fff4b8" opacity="0.38"/><circle cx="64.0" cy="145.9" r="4.0" fill="#ffe468" opacity="0.44"/><circle cx="8.9" cy="169.0" r="3.1" fill="#fff4b8" opacity="0.37"/><circle cx="60.9" cy="148.0" r="4.0" fill="#fff4b8" opacity="0.24"/><circle cx="22.7" cy="136.8" r="2.6" fill="#ffee98" opacity="0.47"/><circle cx="2.1" cy="143.3" r="3.1" fill="#ffe468" opacity="0.28"/><circle cx="29.9" cy="161.3" r="3.9" fill="#ffee98" opacity="0.43"/><circle cx="-0.1" cy="147.0" r="3.8" fill="#fff4b8" opacity="0.43"/><circle cx="34.4" cy="130.1" r="3.8" fill="#fff4b8" opacity="0.22"/><circle cx="18.6" cy="146.5" r="4.4" fill="#ffee98" opacity="0.37"/><circle cx="32.1" cy="127.8" r="2.6" fill="#fff0a0" opacity="0.34"/><circle cx="43.1" cy="144.5" r="3.9" fill="#ffe468" opacity="0.49"/><circle cx="74.3" cy="153.1" r="2.8" fill="#ffee98" opacity="0.36"/><circle cx="46.9" cy="156.5" r="3.3" fill="#fff4b8" opacity="0.36"/><circle cx="41.2" cy="139.2" r="3.0" fill="#ffee98" opacity="0.40"/><circle cx="74.2" cy="141.5" r="3.9" fill="#fff0a0" opacity="0.43"/><circle cx="-0.9" cy="147.1" r="2.7" fill="#ffe468" opacity="0.43"/><circle cx="2.3" cy="150.0" r="3.1" fill="#ffee98" opacity="0.33"/><rect y="167.6" width="26" height="10" fill="url(#p1d)"/><ellipse cx="78.2" cy="172.6" rx="1.1" ry="0.5" fill="#f6d050" transform="rotate(-8 78.2 172.6)"/><ellipse cx="59.3" cy="174.5" rx="2.0" ry="0.8" fill="#3c2404" transform="rotate(-2 59.3 174.5)"/><ellipse cx="15.9" cy="174.6" rx="2.2" ry="0.9" fill="#c88a10" transform="rotate(-20 15.9 174.6)"/><ellipse cx="51.3" cy="175.6" rx="1.8" ry="0.8" fill="#e0a820" transform="rotate(-28 51.3 175.6)"/><ellipse cx="23.3" cy="176.7" rx="1.7" ry="0.7" fill="#6e4408" transform="rotate(-12 23.3 176.7)"/><ellipse cx="40.0" cy="170.5" rx="1.6" ry="0.7" fill="#8a5a0a" transform="rotate(5 40.0 170.5)"/><ellipse cx="49.8" cy="171.8" rx="2.0" ry="0.8" fill="#c88a10" transform="rotate(-17 49.8 171.8)"/><ellipse cx="60.4" cy="174.7" rx="1.1" ry="0.5" fill="#8a5a0a" transform="rotate(-3 60.4 174.7)"/><ellipse cx="52.7" cy="172.8" rx="1.4" ry="0.6" fill="#f6d050" transform="rotate(5 52.7 172.8)"/><ellipse cx="28.5" cy="175.4" rx="2.2" ry="0.9" fill="#f6d050" transform="rotate(8 28.5 175.4)"/><ellipse cx="11.8" cy="176.8" rx="1.4" ry="0.6" fill="#2a1802" transform="rotate(-34 11.8 176.8)"/><ellipse cx="52.6" cy="175.8" rx="1.7" ry="0.7" fill="#6e4408" transform="rotate(-30 52.6 175.8)"/><ellipse cx="72.9" cy="176.0" rx="1.3" ry="0.5" fill="#fbe28a" transform="rotate(-5 72.9 176.0)"/><ellipse cx="42.5" cy="174.8" rx="1.4" ry="0.6" fill="#c88a10" transform="rotate(-31 42.5 174.8)"/><ellipse cx="65.2" cy="173.3" rx="2.1" ry="0.9" fill="#f6d050" transform="rotate(-7 65.2 173.3)"/><ellipse cx="38.7" cy="174.6" rx="2.1" ry="0.9" fill="#fbe28a" transform="rotate(-26 38.7 174.6)"/><ellipse cx="54.8" cy="165.9" rx="1.4" ry="0.6" fill="#c88a10" transform="rotate(-8 54.8 165.9)"/><ellipse cx="54.8" cy="170.5" rx="1.6" ry="0.7" fill="#fbe28a" transform="rotate(-30 54.8 170.5)"/><ellipse cx="47.1" cy="172.0" rx="1.7" ry="0.7" fill="#e0a820" transform="rotate(-16 47.1 172.0)"/><ellipse cx="66.6" cy="176.9" rx="1.4" ry="0.6" fill="#6e4408" transform="rotate(9 66.6 176.9)"/><ellipse cx="30.3" cy="171.9" rx="1.9" ry="0.8" fill="#8a5a0a" transform="rotate(-26 30.3 171.9)"/><ellipse cx="24.3" cy="173.5" rx="1.4" ry="0.6" fill="#6e4408" transform="rotate(-15 24.3 173.5)"/><ellipse cx="58.6" cy="171.3" rx="2.2" ry="0.9" fill="#8a5a0a" transform="rotate(-7 58.6 171.3)"/><ellipse cx="46.1" cy="165.7" rx="1.6" ry="0.7" fill="#f6d050" transform="rotate(-10 46.1 165.7)"/><ellipse cx="76.7" cy="173.3" rx="1.7" ry="0.7" fill="#6e4408" transform="rotate(-12 76.7 173.3)"/><ellipse cx="67.0" cy="176.8" rx="1.9" ry="0.8" fill="#2a1802" transform="rotate(-23 67.0 176.8)"/><ellipse cx="60.7" cy="173.5" rx="1.5" ry="0.6" fill="#c88a10" transform="rotate(2 60.7 173.5)"/><ellipse cx="48.4" cy="174.9" rx="2.0" ry="0.8" fill="#8a5a0a" transform="rotate(-34 48.4 174.9)"/><ellipse cx="24.5" cy="176.7" rx="1.2" ry="0.5" fill="#8a5a0a" transform="rotate(-34 24.5 176.7)"/><ellipse cx="54.6" cy="168.0" rx="1.1" ry="0.5" fill="#8a5a0a" transform="rotate(-1 54.6 168.0)"/><ellipse cx="14.9" cy="176.8" rx="2.0" ry="0.8" fill="#fbe28a" transform="rotate(-30 14.9 176.8)"/><ellipse cx="10.8" cy="175.0" rx="1.1" ry="0.5" fill="#2a1802" transform="rotate(-20 10.8 175.0)"/><ellipse cx="58.9" cy="172.1" rx="2.2" ry="0.9" fill="#fbe28a" transform="rotate(-6 58.9 172.1)"/><ellipse cx="36.6" cy="174.0" rx="2.3" ry="0.9" fill="#c88a10" transform="rotate(-4 36.6 174.0)"/><ellipse cx="43.2" cy="168.5" rx="1.1" ry="0.5" fill="#3c2404" transform="rotate(-9 43.2 168.5)"/><ellipse cx="62.0" cy="168.0" rx="1.5" ry="0.6" fill="#3c2404" transform="rotate(-11 62.0 168.0)"/><ellipse cx="67.4" cy="170.2" rx="2.2" ry="0.9" fill="#3c2404" transform="rotate(-2 67.4 170.2)"/><ellipse cx="34.3" cy="176.9" rx="1.1" ry="0.5" fill="#2a1802" transform="rotate(-26 34.3 176.9)"/><ellipse cx="26.2" cy="176.1" rx="1.8" ry="0.8" fill="#c88a10" transform="rotate(-15 26.2 176.1)"/><ellipse cx="23.3" cy="174.9" rx="1.4" ry="0.6" fill="#3c2404" transform="rotate(-5 23.3 174.9)"/><ellipse cx="30.6" cy="176.2" rx="1.8" ry="0.8" fill="#c88a10" transform="rotate(-32 30.6 176.2)"/><ellipse cx="61.7" cy="176.8" rx="1.6" ry="0.7" fill="#3c2404" transform="rotate(-15 61.7 176.8)"/><ellipse cx="16.6" cy="176.4" rx="1.3" ry="0.5" fill="#f6d050" transform="rotate(3 16.6 176.4)"/><ellipse cx="59.2" cy="171.1" rx="1.3" ry="0.5" fill="#c88a10" transform="rotate(-18 59.2 171.1)"/><ellipse cx="37.2" cy="168.9" rx="2.2" ry="0.9" fill="#e0a820" transform="rotate(-19 37.2 168.9)"/><ellipse cx="42.9" cy="172.8" rx="2.2" ry="0.9" fill="#6e4408" transform="rotate(-5 42.9 172.8)"/><ellipse cx="69.4" cy="174.2" rx="1.3" ry="0.5" fill="#c88a10" transform="rotate(-11 69.4 174.2)"/><ellipse cx="77.3" cy="173.1" rx="2.0" ry="0.8" fill="#3c2404" transform="rotate(7 77.3 173.1)"/><ellipse cx="73.7" cy="171.8" rx="2.1" ry="0.9" fill="#fbe28a" transform="rotate(-7 73.7 171.8)"/><ellipse cx="64.8" cy="171.0" rx="1.8" ry="0.8" fill="#c88a10" transform="rotate(-9 64.8 171.0)"/><ellipse cx="20.0" cy="175.7" rx="1.3" ry="0.6" fill="#c88a10" transform="rotate(5 20.0 175.7)"/><ellipse cx="60.9" cy="171.1" rx="1.7" ry="0.7" fill="#3c2404" transform="rotate(-26 60.9 171.1)"/><ellipse cx="49.0" cy="174.8" rx="1.3" ry="0.5" fill="#c88a10" transform="rotate(-27 49.0 174.8)"/><ellipse cx="14.8" cy="176.2" rx="1.9" ry="0.8" fill="#6e4408" transform="rotate(-5 14.8 176.2)"/><ellipse cx="57.6" cy="176.1" rx="2.0" ry="0.8" fill="#8a5a0a" transform="rotate(-34 57.6 176.1)"/><ellipse cx="64.3" cy="173.4" rx="2.2" ry="0.9" fill="#6e4408" transform="rotate(-7 64.3 173.4)"/><ellipse cx="23.6" cy="174.2" rx="1.7" ry="0.7" fill="#c88a10" transform="rotate(-16 23.6 174.2)"/><ellipse cx="31.1" cy="174.1" rx="1.7" ry="0.7" fill="#e0a820" transform="rotate(7 31.1 174.1)"/><ellipse cx="59.1" cy="173.4" rx="1.9" ry="0.8" fill="#6e4408" transform="rotate(7 59.1 173.4)"/><ellipse cx="36.6" cy="173.0" rx="2.3" ry="0.9" fill="#6e4408" transform="rotate(6 36.6 173.0)"/><ellipse cx="40.2" cy="168.6" rx="1.9" ry="0.8" fill="#e0a820" transform="rotate(-20 40.2 168.6)"/><ellipse cx="29.5" cy="176.2" rx="2.0" ry="0.8" fill="#f6d050" transform="rotate(4 29.5 176.2)"/><ellipse cx="19.6" cy="174.5" rx="2.2" ry="0.9" fill="#8a5a0a" transform="rotate(-14 19.6 174.5)"/><ellipse cx="61.8" cy="171.9" rx="1.1" ry="0.5" fill="#f6d050" transform="rotate(-23 61.8 171.9)"/><ellipse cx="35.4" cy="176.1" rx="1.4" ry="0.6" fill="#8a5a0a" transform="rotate(1 35.4 176.1)"/><ellipse cx="41.9" cy="170.4" rx="1.6" ry="0.7" fill="#2a1802" transform="rotate(-30 41.9 170.4)"/><ellipse cx="16.1" cy="175.1" rx="1.2" ry="0.5" fill="#c88a10" transform="rotate(-24 16.1 175.1)"/><ellipse cx="22.5" cy="176.8" rx="1.6" ry="0.7" fill="#6e4408" transform="rotate(-29 22.5 176.8)"/><ellipse cx="24.9" cy="176.1" rx="1.2" ry="0.5" fill="#2a1802" transform="rotate(-31 24.9 176.1)"/><ellipse cx="32.9" cy="170.6" rx="2.2" ry="0.9" fill="#c88a10" transform="rotate(6 32.9 170.6)"/><ellipse cx="23.4" cy="176.3" rx="1.9" ry="0.8" fill="#e0a820" transform="rotate(-14 23.4 176.3)"/><ellipse cx="73.5" cy="173.3" rx="1.9" ry="0.8" fill="#fbe28a" transform="rotate(-20 73.5 173.3)"/><ellipse cx="55.2" cy="170.3" rx="1.0" ry="0.4" fill="#fbe28a" transform="rotate(-23 55.2 170.3)"/><ellipse cx="33.0" cy="172.0" rx="1.1" ry="0.5" fill="#2a1802" transform="rotate(-22 33.0 172.0)"/><ellipse cx="44.7" cy="168.3" rx="2.1" ry="0.9" fill="#c88a10" transform="rotate(-19 44.7 168.3)"/><ellipse cx="62.7" cy="168.9" rx="1.7" ry="0.7" fill="#fbe28a" transform="rotate(4 62.7 168.9)"/><ellipse cx="44.0" cy="175.5" rx="1.9" ry="0.8" fill="#f6d050" transform="rotate(1 44.0 175.5)"/><ellipse cx="75.1" cy="173.6" rx="1.3" ry="0.5" fill="#6e4408" transform="rotate(-27 75.1 173.6)"/><ellipse cx="26.1" cy="173.6" rx="1.9" ry="0.8" fill="#fbe28a" transform="rotate(-30 26.1 173.6)"/><ellipse cx="74.0" cy="174.9" rx="1.6" ry="0.7" fill="#6e4408" transform="rotate(-7 74.0 174.9)"/><ellipse cx="77.2" cy="176.3" rx="2.2" ry="0.9" fill="#6e4408" transform="rotate(0 77.2 176.3)"/><ellipse cx="73.1" cy="176.0" rx="2.0" ry="0.8" fill="#fbe28a" transform="rotate(3 73.1 176.0)"/><ellipse cx="19.2" cy="173.4" rx="1.0" ry="0.4" fill="#fbe28a" transform="rotate(-20 19.2 173.4)"/><ellipse cx="62.1" cy="173.7" rx="1.2" ry="0.5" fill="#6e4408" transform="rotate(-6 62.1 173.7)"/><ellipse cx="11.2" cy="176.5" rx="2.3" ry="1.0" fill="#c88a10" transform="rotate(-16 11.2 176.5)"/><ellipse cx="61.9" cy="169.2" rx="2.2" ry="0.9" fill="#3c2404" transform="rotate(-25 61.9 169.2)"/><ellipse cx="23.0" cy="174.7" rx="1.2" ry="0.5" fill="#2a1802" transform="rotate(-28 23.0 174.7)"/><ellipse cx="48.9" cy="174.9" rx="1.7" ry="0.7" fill="#8a5a0a" transform="rotate(-20 48.9 174.9)"/><ellipse cx="48.8" cy="173.0" rx="1.8" ry="0.8" fill="#3c2404" transform="rotate(7 48.8 173.0)"/><ellipse cx="64.1" cy="173.6" rx="1.6" ry="0.7" fill="#6e4408" transform="rotate(-5 64.1 173.6)"/><ellipse cx="33.2" cy="170.0" rx="2.2" ry="0.9" fill="#2a1802" transform="rotate(-17 33.2 170.0)"/><ellipse cx="43.0" cy="166.5" rx="2.1" ry="0.9" fill="#2a1802" transform="rotate(-8 43.0 166.5)"/><ellipse cx="17.2" cy="176.6" rx="2.2" ry="0.9" fill="#fbe28a" transform="rotate(-2 17.2 176.6)"/><ellipse cx="45.4" cy="172.3" rx="1.0" ry="0.4" fill="#3c2404" transform="rotate(-17 45.4 172.3)"/><ellipse cx="59.8" cy="168.2" rx="2.0" ry="0.8" fill="#fbe28a" transform="rotate(-16 59.8 168.2)"/><ellipse cx="70.8" cy="171.1" rx="1.3" ry="0.6" fill="#e0a820" transform="rotate(-20 70.8 171.1)"/><ellipse cx="44.2" cy="172.7" rx="1.1" ry="0.4" fill="#6e4408" transform="rotate(-2 44.2 172.7)"/><ellipse cx="72.7" cy="173.6" rx="1.9" ry="0.8" fill="#f6d050" transform="rotate(-31 72.7 173.6)"/><ellipse cx="78.9" cy="173.8" rx="2.1" ry="0.9" fill="#fbe28a" transform="rotate(-1 78.9 173.8)"/><ellipse cx="38.5" cy="169.5" rx="1.3" ry="0.5" fill="#2a1802" transform="rotate(1 38.5 169.5)"/><ellipse cx="17.6" cy="176.8" rx="1.7" ry="0.7" fill="#c88a10" transform="rotate(-28 17.6 176.8)"/><ellipse cx="70.8" cy="173.1" rx="1.6" ry="0.7" fill="#8a5a0a" transform="rotate(-20 70.8 173.1)"/><ellipse cx="60.0" cy="176.8" rx="1.2" ry="0.5" fill="#e0a820" transform="rotate(-7 60.0 176.8)"/><ellipse cx="66.1" cy="173.8" rx="1.5" ry="0.6" fill="#f6d050" transform="rotate(-33 66.1 173.8)"/><ellipse cx="30.4" cy="173.8" rx="1.4" ry="0.6" fill="#fbe28a" transform="rotate(-4 30.4 173.8)"/><ellipse cx="19.0" cy="174.0" rx="2.0" ry="0.8" fill="#f6d050" transform="rotate(-23 19.0 174.0)"/><ellipse cx="29.7" cy="170.7" rx="2.2" ry="0.9" fill="#f6d050" transform="rotate(-15 29.7 170.7)"/><ellipse cx="67.7" cy="174.3" rx="1.6" ry="0.7" fill="#c88a10" transform="rotate(5 67.7 174.3)"/><ellipse cx="70.6" cy="170.3" rx="1.3" ry="0.5" fill="#f6d050" transform="rotate(-23 70.6 170.3)"/><ellipse cx="75.5" cy="171.7" rx="1.8" ry="0.8" fill="#8a5a0a" transform="rotate(-15 75.5 171.7)"/><path d="M42.0 154.6L51.2 154.0L49.6 157.6L39.6 158.0Z" fill="#fff4c0"/><path d="M39.6 158.0L49.6 157.6L48.8 162.0L40.6 162.0Z" fill="#f6da80"/><path d="M51.2 154.0L49.6 157.6L48.8 162.0" fill="none" stroke="#3a2404" stroke-width=".9"/><path d="M35.8 161.6L45.0 161.0L43.4 164.6L33.4 165.0Z" fill="#fff4c0"/><path d="M33.4 165.0L43.4 164.6L42.6 169.4L34.4 169.4Z" fill="#f6da80"/><path d="M45.0 161.0L43.4 164.6L42.6 169.4" fill="none" stroke="#3a2404" stroke-width=".9"/><path d="M47.8 161.0L57.0 160.4L55.4 164.0L45.4 164.4Z" fill="#fff4c0"/><path d="M45.4 164.4L55.4 164.0L54.6 169.2L46.4 169.2Z" fill="#f6da80"/><path d="M57.0 160.4L55.4 164.0L54.6 169.2" fill="none" stroke="#3a2404" stroke-width=".9"/><path d="M45.6 153.8L50.4 151.6L54 153.6M51.6 159L56 156.4" fill="none" stroke="#3a2404" stroke-width=".9"/><ellipse cx="68.2" cy="170.3" rx="1.5" ry="0.6" fill="#c88a10" transform="rotate(-14 68.2 170.3)"/><ellipse cx="56.0" cy="176.0" rx="1.5" ry="0.6" fill="#6e4408" transform="rotate(-25 56.0 176.0)"/><ellipse cx="34.3" cy="170.6" rx="1.9" ry="0.8" fill="#f6d050" transform="rotate(-18 34.3 170.6)"/><ellipse cx="32.3" cy="170.0" rx="1.8" ry="0.8" fill="#8a5a0a" transform="rotate(-12 32.3 170.0)"/><ellipse cx="61.0" cy="172.5" rx="1.1" ry="0.5" fill="#f6d050" transform="rotate(-16 61.0 172.5)"/><ellipse cx="65.2" cy="169.5" rx="1.3" ry="0.5" fill="#c88a10" transform="rotate(5 65.2 169.5)"/><ellipse cx="54.7" cy="171.9" rx="1.1" ry="0.5" fill="#6e4408" transform="rotate(-2 54.7 171.9)"/><ellipse cx="65.7" cy="168.1" rx="1.7" ry="0.7" fill="#8a5a0a" transform="rotate(-8 65.7 168.1)"/><ellipse cx="60.9" cy="168.7" rx="1.3" ry="0.6" fill="#f6d050" transform="rotate(-20 60.9 168.7)"/><ellipse cx="32.2" cy="174.2" rx="1.0" ry="0.4" fill="#c88a10" transform="rotate(-33 32.2 174.2)"/><ellipse cx="52.6" cy="175.8" rx="1.7" ry="0.7" fill="#3c2404" transform="rotate(-4 52.6 175.8)"/><ellipse cx="26.8" cy="168.5" rx="1.9" ry="0.8" fill="#fbe28a" transform="rotate(-15 26.8 168.5)"/><ellipse cx="54.3" cy="174.7" rx="1.6" ry="0.7" fill="#c88a10" transform="rotate(3 54.3 174.7)"/><ellipse cx="59.9" cy="169.4" rx="1.7" ry="0.7" fill="#f6d050" transform="rotate(7 59.9 169.4)"/><ellipse cx="44.3" cy="174.6" rx="1.9" ry="0.8" fill="#f6d050" transform="rotate(-19 44.3 174.6)"/><ellipse cx="46.5" cy="169.9" rx="1.7" ry="0.7" fill="#e0a820" transform="rotate(-19 46.5 169.9)"/><ellipse cx="25.6" cy="173.1" rx="1.9" ry="0.8" fill="#e0a820" transform="rotate(-24 25.6 173.1)"/><ellipse cx="39.0" cy="173.2" rx="1.7" ry="0.7" fill="#2a1802" transform="rotate(-3 39.0 173.2)"/><ellipse cx="44.3" cy="170.2" rx="2.0" ry="0.8" fill="#6e4408" transform="rotate(-28 44.3 170.2)"/><ellipse cx="65.7" cy="172.8" rx="1.7" ry="0.7" fill="#f6d050" transform="rotate(4 65.7 172.8)"/><ellipse cx="30.7" cy="170.6" rx="1.1" ry="0.4" fill="#fbe28a" transform="rotate(4 30.7 170.6)"/><ellipse cx="58.0" cy="174.6" rx="1.9" ry="0.8" fill="#e0a820" transform="rotate(-30 58.0 174.6)"/><ellipse cx="53.9" cy="172.3" rx="1.5" ry="0.6" fill="#f6d050" transform="rotate(-25 53.9 172.3)"/><ellipse cx="46.9" cy="173.6" rx="1.7" ry="0.7" fill="#e0a820" transform="rotate(-32 46.9 173.6)"/><ellipse cx="38.5" cy="172.0" rx="1.8" ry="0.8" fill="#3c2404" transform="rotate(-27 38.5 172.0)"/><ellipse cx="46.5" cy="174.5" rx="2.2" ry="0.9" fill="#c88a10" transform="rotate(-6 46.5 174.5)"/></g><circle cx="15.2" cy="61.8" r="6" fill="none" stroke="#a24c18" stroke-width="1.3"/><path d="M15.2 58L19.8 61.8L15.2 65.6L10.6 61.8Z" fill="none" stroke="#a24c18" stroke-width="1.1"/><path d="M27 66.4H67" stroke="#3c3c0a" stroke-width="1.4"/><path d="M25.6 71.2H70" stroke="#15150a" stroke-width="1"/><path d="M25.6 74.4H67.4" stroke="#6e6a10" stroke-width="1"/><path d="M25.6 77.6H57" stroke="#3a3a0c" stroke-width="1"/><path d="M25.6 80.6H52.4" stroke="#202008" stroke-width="1"/><rect x="11.4" y="72" width="11" height="11" fill="#f4f0e0"/><rect x="11.4" y="72.0" width="1.6" height="1.6" fill="#1a1a1a"/><rect x="14.5" y="72.0" width="1.6" height="1.6" fill="#1a1a1a"/><rect x="16.1" y="72.0" width="1.6" height="1.6" fill="#1a1a1a"/><rect x="17.7" y="72.0" width="1.6" height="1.6" fill="#1a1a1a"/><rect x="19.2" y="72.0" width="1.6" height="1.6" fill="#1a1a1a"/><rect x="20.8" y="72.0" width="1.6" height="1.6" fill="#1a1a1a"/><rect x="11.4" y="73.6" width="1.6" height="1.6" fill="#1a1a1a"/><rect x="16.1" y="73.6" width="1.6" height="1.6" fill="#1a1a1a"/><rect x="20.8" y="73.6" width="1.6" height="1.6" fill="#1a1a1a"/><rect x="11.4" y="75.1" width="1.6" height="1.6" fill="#1a1a1a"/><rect x="13.0" y="75.1" width="1.6" height="1.6" fill="#1a1a1a"/><rect x="16.1" y="75.1" width="1.6" height="1.6" fill="#1a1a1a"/><rect x="17.7" y="75.1" width="1.6" height="1.6" fill="#1a1a1a"/><rect x="19.2" y="75.1" width="1.6" height="1.6" fill="#1a1a1a"/><rect x="20.8" y="75.1" width="1.6" height="1.6" fill="#1a1a1a"/><rect x="14.5" y="76.7" width="1.6" height="1.6" fill="#1a1a1a"/><rect x="16.1" y="76.7" width="1.6" height="1.6" fill="#1a1a1a"/><rect x="17.7" y="76.7" width="1.6" height="1.6" fill="#1a1a1a"/><rect x="11.4" y="78.3" width="1.6" height="1.6" fill="#1a1a1a"/><rect x="17.7" y="78.3" width="1.6" height="1.6" fill="#1a1a1a"/><rect x="11.4" y="79.8" width="1.6" height="1.6" fill="#1a1a1a"/><rect x="13.0" y="79.8" width="1.6" height="1.6" fill="#1a1a1a"/><rect x="14.5" y="79.8" width="1.6" height="1.6" fill="#1a1a1a"/><rect x="16.1" y="79.8" width="1.6" height="1.6" fill="#1a1a1a"/><rect x="17.7" y="79.8" width="1.6" height="1.6" fill="#1a1a1a"/><rect x="11.4" y="81.4" width="1.6" height="1.6" fill="#1a1a1a"/><rect x="13.0" y="81.4" width="1.6" height="1.6" fill="#1a1a1a"/><rect x="14.5" y="81.4" width="1.6" height="1.6" fill="#1a1a1a"/><rect x="17.7" y="81.4" width="1.6" height="1.6" fill="#1a1a1a"/><rect x="19.2" y="81.4" width="1.6" height="1.6" fill="#1a1a1a"/><rect x="20.8" y="81.4" width="1.6" height="1.6" fill="#1a1a1a"/></svg>
<svg class="a" style="left:198.80px;top:327.40px" width="42.40" height="12.69" viewBox="0 -9.40 42.40 12.69" fill="#1a1405"><text x="0" y="0" font-size="9.4" font-weight="bold" letter-spacing="0.7" fill="#1a1405">万鑫金融</text></svg>
<svg class="a" style="left:452px;top:268px" width="78" height="177" viewBox="0 0 78 177"><defs><linearGradient id="p2a" gradientUnits="userSpaceOnUse" x1="-12" y1="-6" x2="92" y2="172"><stop offset="0" stop-color="#ffee00"/><stop offset=".22" stop-color="#ffe400"/><stop offset=".5" stop-color="#f4b800"/><stop offset=".74" stop-color="#ffe000"/><stop offset="1" stop-color="#fff400"/></linearGradient></defs><rect width="78" height="177" fill="url(#p2a)"/><path d="M4.6 10.4H20.0" stroke="#a82c1a" stroke-width="1.2"/><path d="M4.6 14.5H73.8" stroke="#b97a1c" stroke-width="0.8"/><path d="M16.0 15.6H62.4" stroke="#1c1a08" stroke-width="1"/><path d="M22.3 18.9H56.0" stroke="#4a4a10" stroke-width="1"/><path d="M4.6 26.3H15.6" stroke="#a82c1a" stroke-width="1.2"/><path d="M4.6 30.4H73.8" stroke="#b97a1c" stroke-width="0.8"/><path d="M15.3 31.5H63.2" stroke="#3c3c10" stroke-width="1.2"/><path d="M4.6 42.2H20.0" stroke="#a82c1a" stroke-width="1.2"/><path d="M4.6 46.4H73.8" stroke="#b97a1c" stroke-width="0.8"/><path d="M34.0 48.4H44.4" stroke="#2a2a0c" stroke-width="1"/><path d="M4.6 59.2H20.0" stroke="#a82c1a" stroke-width="1.2"/><path d="M4.6 63.4H73.8" stroke="#b97a1c" stroke-width="0.8"/><path d="M30.0 65.5H48.8" stroke="#1a1a08" stroke-width="1"/><path d="M4.6 75.1H24.2" stroke="#a82c1a" stroke-width="1.2"/><path d="M4.6 79.3H73.8" stroke="#b97a1c" stroke-width="0.8"/><path d="M14.0 81.5H64.8" stroke="#16160a" stroke-width="1"/><path d="M15.3 84.6H63.2" stroke="#2c2c0c" stroke-width="1"/><path d="M4.6 91.2H20.0" stroke="#a82c1a" stroke-width="1.2"/><path d="M4.6 95.3H73.8" stroke="#b97a1c" stroke-width="0.8"/><path d="M16.2 98.4H62.3" stroke="#3a3a10" stroke-width="1"/><path d="M22.3 101.5H56.2" stroke="#1c1c0a" stroke-width="1"/><path d="M4.6 107.2H20.0" stroke="#a82c1a" stroke-width="1.2"/><path d="M4.6 111.3H73.8" stroke="#b97a1c" stroke-width="0.8"/><path d="M16.0 112.9H62.3" stroke="#66640f" stroke-width="1.6"/><path d="M22.3 116.2H56.0" stroke="#4a4a10" stroke-width="1"/><path d="M4.6 123.4H29.0" stroke="#a82c1a" stroke-width="1.2"/><path d="M4.6 127.3H73.8" stroke="#b97a1c" stroke-width="0.8"/><path d="M16.0 129.0H62.3" stroke="#66640f" stroke-width="1.6"/><path d="M22.3 132.3H56.0" stroke="#1a1a0a" stroke-width="1"/><path d="M4.6 145.6H10.4" stroke="#2a2a0c" stroke-width="1"/><path d="M16.8 145.6H48.8" stroke="#2a2a0c" stroke-width="1"/><path d="M4.6 149.5H40.2" stroke="#3a3a10" stroke-width="1"/><path d="M12.6 142.2L13.6 141.4L12.6 148" fill="none" stroke="#e01818" stroke-width="1.3"/><path d="M4.8 161.4V156.8H10M67.4 156.8H73.6V161.4M73.6 168.4V173H67.4M10 173H4.8V168.4" fill="none" stroke="#4c4a12" stroke-width="1.1"/></svg>
</body></html>
